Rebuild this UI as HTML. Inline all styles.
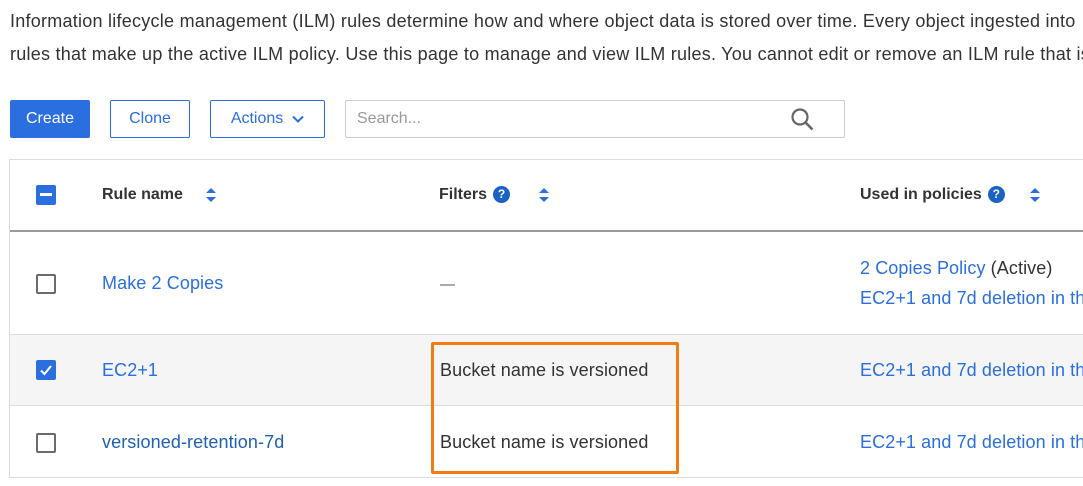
<!DOCTYPE html>
<html><head><meta charset="utf-8"><style>
body{margin:0;width:1083px;height:486px;overflow:hidden;background:#fff;font-family:"Liberation Sans",sans-serif;color:#333;position:relative}
.a{position:absolute;white-space:nowrap}
.p{font-size:18px;left:10px;color:#333;letter-spacing:0.25px}
.btn{position:absolute;top:100px;height:38px;box-sizing:border-box;border:1px solid #2a6ee0;border-radius:2px;color:#2a6ee0;font-size:16px;display:flex;align-items:center;justify-content:center}
.lnk{color:#2a6ee0}
.th{font-size:16px;font-weight:bold;color:#333;top:186px}
.cb{position:absolute;left:36px;width:20px;height:20px;box-sizing:border-box;border:2px solid #6b6b6b;border-radius:2px;background:#fff}
.td{font-size:18px;letter-spacing:0.1px}
.q{display:inline-block;width:17px;height:17px;border-radius:50%;background:#1b62c4;color:#fff;font-size:12px;text-align:center;line-height:17px;vertical-align:1px;margin-left:6px}
</style></head><body>
<div class="a p" style="top:11px">Information lifecycle management (ILM) rules determine how and where object data is stored over time. Every object ingested into</div>
<div class="a p" style="top:44px">rules that make up the active ILM policy. Use this page to manage and view ILM rules. You cannot edit or remove an ILM rule that is</div>

<div class="btn" style="left:10px;width:80px;background:#2a6ee0;color:#fff">Create</div>
<div class="btn" style="left:110px;width:80px">Clone</div>
<div class="btn" style="left:210px;width:115px">Actions&nbsp;&nbsp;<svg width="12" height="8" viewBox="0 0 12 8"><path d="M1 1.5l5 5 5-5" stroke="#2a6ee0" stroke-width="2" fill="none"/></svg></div>
<div style="position:absolute;left:345px;top:100px;width:500px;height:38px;box-sizing:border-box;border:1px solid #ccc;border-radius:2px"></div>
<div class="a" style="left:357px;top:110px;font-size:16px;color:#999">Search...</div>
<svg class="a" style="left:790px;top:107px" width="26" height="26" viewBox="0 0 26 26"><circle cx="10" cy="10" r="7.5" stroke="#666" stroke-width="2.2" fill="none"/><path d="M15.5 15.5l7 7" stroke="#666" stroke-width="2.5"/></svg>

<div style="position:absolute;left:9px;top:159px;width:1100px;height:319px;box-sizing:border-box;border:1px solid #ddd;border-right:none"></div>
<div style="position:absolute;left:10px;top:230px;width:1080px;height:2px;background:#999"></div>
<div style="position:absolute;left:10px;top:334px;width:1080px;height:72px;background:#f5f5f5;border-top:1px solid #ddd;border-bottom:1px solid #ddd;box-sizing:border-box"></div>

<div class="cb" style="top:185px;background:#2a6ee0;border-color:#2a6ee0"><div style="position:absolute;left:2px;top:6px;width:12px;height:3px;background:#fff"></div></div>
<div class="a th" style="left:102px">Rule name</div>
<svg class="a" style="left:205px;top:187px" width="12" height="16" viewBox="0 0 12 16"><path d="M1 6L6 1 11 6z M1 10L6 15 11 10z" fill="#2a6ee0"/></svg>
<div class="a th" style="left:439px">Filters<span class="q">?</span></div>
<svg class="a" style="left:538px;top:187px" width="12" height="16" viewBox="0 0 12 16"><path d="M1 6L6 1 11 6z M1 10L6 15 11 10z" fill="#2a6ee0"/></svg>
<div class="a th" style="left:860px">Used in policies<span class="q">?</span></div>
<svg class="a" style="left:1029px;top:187px" width="12" height="16" viewBox="0 0 12 16"><path d="M1 6L6 1 11 6z M1 10L6 15 11 10z" fill="#2a6ee0"/></svg>

<div class="cb" style="top:274px"></div>
<div class="a td lnk" style="left:102px;top:273px">Make 2 Copies</div>
<div style="position:absolute;left:440px;top:284px;width:15px;height:2px;background:#aaa"></div>
<div class="a td" style="left:860px;top:258px"><span class="lnk">2 Copies Policy</span> (Active)</div>
<div class="a td lnk" style="left:860px;top:288px">EC2+1 and 7d deletion in th</div>

<div class="cb" style="top:360px;background:#2a6ee0;border-color:#2a6ee0"><svg style="position:absolute;left:1px;top:1px" width="14" height="14" viewBox="0 0 14 14"><path d="M2 7.5l3.5 3.5L12 3" stroke="#fff" stroke-width="2" fill="none"/></svg></div>
<div class="a td lnk" style="left:102px;top:360px">EC2+1</div>
<div class="a td" style="left:440px;top:360px">Bucket name is versioned</div>
<div class="a td lnk" style="left:860px;top:360px">EC2+1 and 7d deletion in th</div>

<div class="cb" style="top:433px"></div>
<div class="a td lnk" style="left:102px;top:432px;color:#1f5fb4">versioned-retention-7d</div>
<div class="a td" style="left:440px;top:432px">Bucket name is versioned</div>
<div class="a td lnk" style="left:860px;top:432px">EC2+1 and 7d deletion in th</div>

<div style="position:absolute;left:431px;top:342px;width:248px;height:132px;box-sizing:border-box;border:3px solid #f47b10;border-radius:2px"></div>
</body></html>
